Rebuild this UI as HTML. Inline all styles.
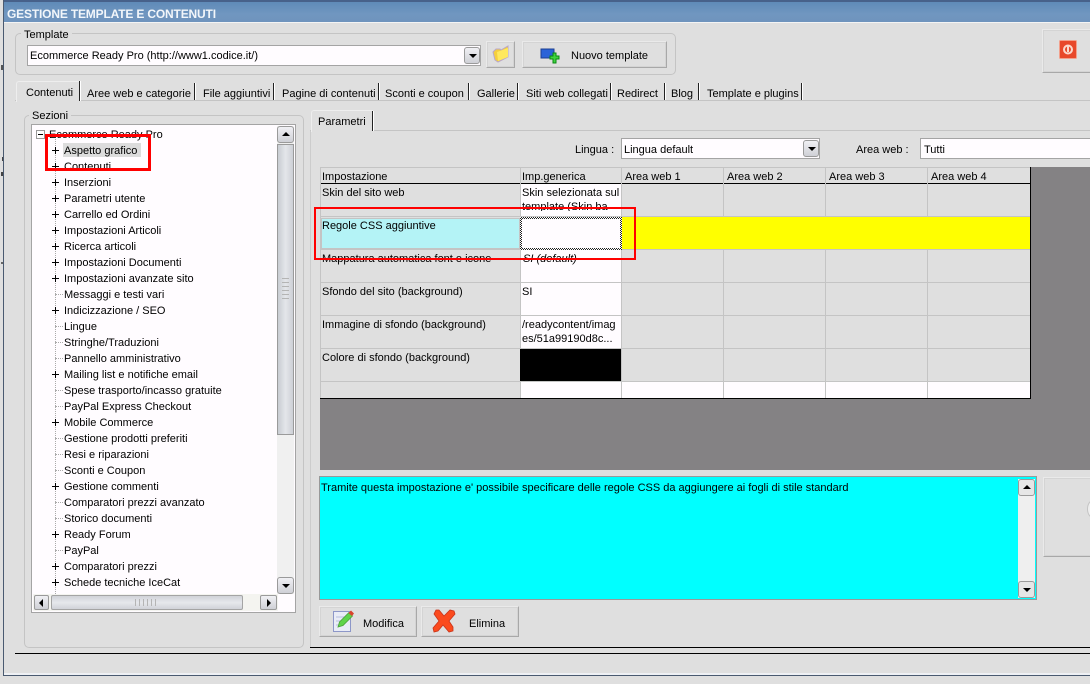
<!DOCTYPE html>
<html lang="it"><head><meta charset="utf-8"><title>Gestione template e contenuti</title>
<style>
html,body{margin:0;padding:0;background:#dfdfdf}
body{width:1090px;height:684px;position:relative;overflow:hidden;font:11px/14px "Liberation Sans",sans-serif;color:#000}
div,span{position:absolute;box-sizing:border-box}
.t{white-space:nowrap;font-size:11px;line-height:14px;margin-top:1px}
.g{border:1px solid #c4c4c4;border-radius:5px}
.in{background:#fffcff;border:1px solid #a4a4a4}
.btn{background:#dfdfdf;border:1px solid;border-color:#eaeaea #a8a8a8 #a8a8a8 #eaeaea;box-shadow:inset 0 0 0 1px #d4d4d4}
.sb{background:linear-gradient(#f0f0f4,#cfd0d6);border:1px solid #9a9a9a;border-radius:2px}
.sep{width:2px;background:#222;top:83px;height:17px;border-right:1px solid #fff}
.up:after,.dn:after,.lf:after,.rt:after{content:"";position:absolute;width:0;height:0}
.up:after{left:4px;top:5px;border:4px solid transparent;border-top:0;border-bottom:4px solid #000}
.dn:after{left:4px;top:6px;border:4px solid transparent;border-bottom:0;border-top:4px solid #000}
.lf:after{left:4px;top:3px;border:4px solid transparent;border-left:0;border-right:4px solid #000}
.rt:after{left:6px;top:3px;border:4px solid transparent;border-right:0;border-left:4px solid #000}
.p{width:7px;height:7px;left:52px}
.p:before{content:"";position:absolute;left:0;top:3px;width:7px;height:1px;background:#000}
.p:after{content:"";position:absolute;left:3px;top:0;width:1px;height:7px;background:#000}
.h{left:55px;width:8px;height:0;border-top:1px dotted #aaa}
.r{border:2px solid #f00;background:transparent}
.c{background:#dfdfdf}
.w{background:#fffcff}
.gl{background:#c4c4c4}
</style></head><body>
<!-- window frame -->
<div style="left:3px;top:0;width:1087px;height:676px;background:#dfdfdf;border-left:1px solid #4a5a70;border-bottom:1px solid #4a5a70"></div>
<div style="left:4px;top:0;width:1086px;height:2px;background:#47618a"></div>
<div style="left:4px;top:2px;width:1086px;height:20px;background:linear-gradient(#5f8ab8,#7096c0 60%,#6f94bd)"></div>
<div style="left:4px;top:22px;width:1086px;height:1px;background:#f4f4f4"></div>
<div style="left:4px;top:673px;width:1086px;height:2px;background:#eef0f4"></div>
<div style="left:1px;top:65px;width:2px;height:5px;background:#555"></div>
<div style="left:2px;top:157px;width:1px;height:4px;background:#444"></div>
<div style="left:1px;top:172px;width:2px;height:4px;background:#444"></div>
<div style="left:1px;top:262px;width:2px;height:2px;background:#666"></div>
<div class="t" style="left:7px;top:6px;color:#f2f6fa;font-weight:bold;font-size:12px;letter-spacing:-.17px">GESTIONE TEMPLATE E CONTENUTI</div>

<!-- template group -->
<div class="g" style="left:15px;top:33px;width:661px;height:42px"></div>
<div class="c t" style="left:21px;top:27px;padding:0 3px">Template</div>
<div class="in" style="left:27px;top:45px;width:454px;height:21px"></div>
<div class="t" style="left:30px;top:48px">Ecommerce Ready Pro (http://www1.codice.it/)</div>
<div class="sb dn" style="left:464px;top:47px;width:16px;height:17px;border-radius:3px"></div>
<div class="btn" style="left:486px;top:41px;width:29px;height:27px"></div>
<svg style="position:absolute;left:492px;top:45px" width="18" height="18" viewBox="0 0 18 18"><path d="M1 7 L4 4 L8 4 L9 5 L16 1 L16 12 L6 17 L3 15Z" fill="#f5cf3c" stroke="#b9a7c8"/><path d="M5 7 L16 3 L16 12 L6 16Z" fill="#ffe95e"/></svg>
<div class="btn" style="left:522px;top:41px;width:145px;height:27px"></div>
<svg style="position:absolute;left:540px;top:48px" width="20" height="16" viewBox="0 0 20 16"><rect x="1" y="1" width="13" height="9" fill="#2a63d8" stroke="#1c3f92"/><path d="M10 8h3V5h3v3h3v3h-3v4h-3v-4h-3z" fill="#3fd33f" stroke="#0a8a12"/></svg>
<div class="t" style="left:571px;top:48px">Nuovo template</div>
<div class="btn" style="left:1042px;top:29px;width:60px;height:44px"></div>
<svg style="position:absolute;left:1059px;top:40px" width="18" height="19" viewBox="0 0 18 19"><rect x=".5" y=".5" width="17" height="18" rx="1" fill="#e8482a" stroke="#f2a08c"/><circle cx="9" cy="9.500" r="4" fill="none" stroke="#fbd8cc" stroke-width="2"/><rect x="8" y="6" width="2" height="6" fill="#fbd8cc"/></svg>

<!-- tabs -->
<div class="gl" style="left:15px;top:100px;width:1075px;height:1px"></div>
<div class="c" style="left:16px;top:81px;width:63px;height:21px;border-top:1px solid #eee;border-left:1px solid #eee;border-radius:3px 0 0 0"></div>
<div class="t" style="left:26px;top:85px">Contenuti</div>
<div class="sep" style="left:79px;top:81px;height:20px"></div>
<div class="t" style="left:87px;top:86px">Aree web e categorie</div><div class="sep" style="left:194px"></div>
<div class="t" style="left:203px;top:86px">File aggiuntivi</div><div class="sep" style="left:273px"></div>
<div class="t" style="left:282px;top:86px">Pagine di contenuti</div><div class="sep" style="left:378px"></div>
<div class="t" style="left:385px;top:86px">Sconti e coupon</div><div class="sep" style="left:468px"></div>
<div class="t" style="left:477px;top:86px">Gallerie</div><div class="sep" style="left:517px"></div>
<div class="t" style="left:526px;top:86px">Siti web collegati</div><div class="sep" style="left:610px"></div>
<div class="t" style="left:617px;top:86px">Redirect</div><div class="sep" style="left:664px"></div>
<div class="t" style="left:671px;top:86px">Blog</div><div class="sep" style="left:698px"></div>
<div class="t" style="left:707px;top:86px">Template e plugins</div><div class="sep" style="left:801px"></div>

<!-- sezioni -->
<div class="g" style="left:24px;top:115px;width:280px;height:533px"></div>
<div class="c t" style="left:29px;top:108px;padding:0 3px">Sezioni</div>
<div class="in" style="left:31px;top:124px;width:265px;height:489px"></div>
<div style="left:32px;top:125px;width:245px;height:469px;overflow:hidden">
<div style="left:23px;top:9px;width:0;height:460px;border-left:1px dotted #aaa"></div>
</div>
<div style="left:36px;top:130px;width:9px;height:9px;border:1px solid #999;background:#fff"></div>
<div style="left:38px;top:134px;width:5px;height:1px;background:#000"></div>
<div style="left:63px;top:143px;width:78px;height:14px;background:#dcdcdc"></div>
<div id="tree" style="left:0;top:0;width:277px;height:594px;overflow:hidden">
<span class="t" style="left:49px;top:127px">Ecommerce Ready Pro</span>
<span class="t" style="left:64px;top:143px">Aspetto grafico</span><span class="p" style="top:147px"></span>
<span class="t" style="left:64px;top:159px">Contenuti</span><span class="p" style="top:163px"></span>
<span class="t" style="left:64px;top:175px">Inserzioni</span><span class="p" style="top:179px"></span>
<span class="t" style="left:64px;top:191px">Parametri utente</span><span class="p" style="top:195px"></span>
<span class="t" style="left:64px;top:207px">Carrello ed Ordini</span><span class="p" style="top:211px"></span>
<span class="t" style="left:64px;top:223px">Impostazioni Articoli</span><span class="p" style="top:227px"></span>
<span class="t" style="left:64px;top:239px">Ricerca articoli</span><span class="p" style="top:243px"></span>
<span class="t" style="left:64px;top:255px">Impostazioni Documenti</span><span class="p" style="top:259px"></span>
<span class="t" style="left:64px;top:271px">Impostazioni avanzate sito</span><span class="p" style="top:275px"></span>
<span class="t" style="left:64px;top:287px">Messaggi e testi vari</span><span class="h" style="top:294px"></span>
<span class="t" style="left:64px;top:303px">Indicizzazione / SEO</span><span class="p" style="top:307px"></span>
<span class="t" style="left:64px;top:319px">Lingue</span><span class="h" style="top:326px"></span>
<span class="t" style="left:64px;top:335px">Stringhe/Traduzioni</span><span class="h" style="top:342px"></span>
<span class="t" style="left:64px;top:351px">Pannello amministrativo</span><span class="h" style="top:358px"></span>
<span class="t" style="left:64px;top:367px">Mailing list e notifiche email</span><span class="p" style="top:371px"></span>
<span class="t" style="left:64px;top:383px">Spese trasporto/incasso gratuite</span><span class="h" style="top:390px"></span>
<span class="t" style="left:64px;top:399px">PayPal Express Checkout</span><span class="h" style="top:406px"></span>
<span class="t" style="left:64px;top:415px">Mobile Commerce</span><span class="p" style="top:419px"></span>
<span class="t" style="left:64px;top:431px">Gestione prodotti preferiti</span><span class="h" style="top:438px"></span>
<span class="t" style="left:64px;top:447px">Resi e riparazioni</span><span class="h" style="top:454px"></span>
<span class="t" style="left:64px;top:463px">Sconti e Coupon</span><span class="h" style="top:470px"></span>
<span class="t" style="left:64px;top:479px">Gestione commenti</span><span class="p" style="top:483px"></span>
<span class="t" style="left:64px;top:495px">Comparatori prezzi avanzato</span><span class="h" style="top:502px"></span>
<span class="t" style="left:64px;top:511px">Storico documenti</span><span class="h" style="top:518px"></span>
<span class="t" style="left:64px;top:527px">Ready Forum</span><span class="p" style="top:531px"></span>
<span class="t" style="left:64px;top:543px">PayPal</span><span class="h" style="top:550px"></span>
<span class="t" style="left:64px;top:559px">Comparatori prezzi</span><span class="p" style="top:563px"></span>
<span class="t" style="left:64px;top:575px">Schede tecniche IceCat</span><span class="p" style="top:579px"></span>
<span class="t" style="left:64px;top:591px">Varie</span>
</div>
<!-- v scrollbar -->
<div style="left:277px;top:126px;width:17px;height:468px;background:#f0f0f0"></div>
<div class="sb up" style="left:277px;top:126px;width:17px;height:17px;border-radius:3px"></div>
<div style="left:277px;top:144px;width:17px;height:291px;background:linear-gradient(90deg,#c8ccd2,#e4e6ea 50%,#cdd0d6);border:1px solid #9a9a9a"></div>
<div style="left:282px;top:278px;width:7px;height:22px;background:repeating-linear-gradient(#b4b4b4 0 1px,transparent 1px 4px)"></div>
<div class="sb dn" style="left:277px;top:577px;width:17px;height:17px;border-radius:3px"></div>
<!-- h scrollbar -->
<div style="left:33px;top:594px;width:245px;height:17px;background:#f4f4f0"></div>
<div class="sb lf" style="left:34px;top:595px;width:15px;height:15px"></div>
<div style="left:51px;top:595px;width:192px;height:15px;background:linear-gradient(#d0d2d8,#e6e8ec 50%,#d0d2d8);border:1px solid #a4a4a4;border-radius:2px"></div>
<div style="left:135px;top:599px;width:23px;height:7px;background:repeating-linear-gradient(90deg,#b4b4b4 0 1px,transparent 1px 4px)"></div>
<div class="sb rt" style="left:260px;top:595px;width:17px;height:15px"></div>
<!-- red rect 1 -->
<div class="r" style="left:45px;top:134px;width:106px;height:37px;border-width:3px"></div>

<!-- parametri -->
<div style="left:310px;top:130px;width:1px;height:518px;background:#ccc"></div>
<div class="gl" style="left:310px;top:130px;width:780px;height:1px"></div>
<div class="c" style="left:311px;top:110px;width:62px;height:22px;border-top:1px solid #eee;border-left:1px solid #eee;border-radius:3px 0 0 0"></div>
<div class="t" style="left:318px;top:114px">Parametri</div>
<div class="sep" style="left:372px;top:111px;height:20px"></div>
<div class="t" style="left:575px;top:142px">Lingua :</div>
<div class="in" style="left:621px;top:138px;width:199px;height:21px"></div>
<div class="t" style="left:624px;top:142px">Lingua default</div>
<div class="sb dn" style="left:803px;top:140px;width:16px;height:17px;border-radius:3px"></div>
<div class="t" style="left:856px;top:142px">Area web :</div>
<div class="in" style="left:920px;top:138px;width:175px;height:21px"></div>
<div class="t" style="left:924px;top:142px">Tutti</div>

<!-- grid -->
<div style="left:320px;top:167px;width:770px;height:303px;background:#848284"></div>
<div style="left:320px;top:167px;width:711px;height:232px;background:#dfdfdf;border-right:1px solid #000;border-bottom:1px solid #000"></div>
<div class="gl" style="left:320px;top:167px;width:710px;height:1px"></div>
<div class="gl" style="left:320px;top:167px;width:1px;height:231px"></div>
<div class="w" style="left:521px;top:184px;width:100px;height:214px"></div>
<div class="w" style="left:622px;top:382px;width:408px;height:16px"></div>
<div style="left:321px;top:183px;width:709px;height:1px;background:#000"></div>
<div class="gl" style="left:520px;top:167px;width:1px;height:231px"></div>
<div class="gl" style="left:621px;top:167px;width:1px;height:231px"></div>
<div class="gl" style="left:723px;top:167px;width:1px;height:231px"></div>
<div class="gl" style="left:825px;top:167px;width:1px;height:231px"></div>
<div class="gl" style="left:927px;top:167px;width:1px;height:231px"></div>
<div class="gl" style="left:320px;top:216px;width:710px;height:1px"></div>
<div class="gl" style="left:320px;top:249px;width:710px;height:1px"></div>
<div class="gl" style="left:320px;top:282px;width:710px;height:1px"></div>
<div class="gl" style="left:320px;top:315px;width:710px;height:1px"></div>
<div class="gl" style="left:320px;top:348px;width:710px;height:1px"></div>
<div class="gl" style="left:320px;top:381px;width:710px;height:1px"></div>
<div class="t" style="left:322px;top:169px">Impostazione</div>
<div class="t" style="left:522px;top:169px">Imp.generica</div>
<div class="t" style="left:625px;top:169px">Area web 1</div>
<div class="t" style="left:727px;top:169px">Area web 2</div>
<div class="t" style="left:829px;top:169px">Area web 3</div>
<div class="t" style="left:931px;top:169px">Area web 4</div>
<div class="t" style="left:322px;top:185px">Skin del sito web</div>
<div class="t" style="left:522px;top:185px">Skin selezionata sul</div>
<div style="left:522px;top:199px;width:98px;height:12px;overflow:hidden"><span class="t" style="left:0;top:0">template (Skin ba</span></div>
<div style="left:321px;top:218px;width:199px;height:31px;background:#b4f3f6;border:1px solid #c4c4c4"></div>
<div class="t" style="left:322px;top:218px">Regole CSS aggiuntive</div>
<div style="left:520px;top:217px;width:102px;height:33px;background:conic-gradient(#222 25%,#fff 0 50%,#222 0 75%,#fff 0) 0 0/2px 2px"></div>
<div class="w" style="left:522px;top:219px;width:98px;height:29px"></div>
<div style="left:622px;top:217px;width:408px;height:32px;background:#ff0"></div>
<div class="t" style="left:322px;top:251px">Mappatura automatica font e icone</div>
<div class="t" style="left:523px;top:251px;font-style:italic">SI (default)</div>
<div class="t" style="left:322px;top:284px">Sfondo del sito (background)</div>
<div class="t" style="left:522px;top:284px">SI</div>
<div class="t" style="left:322px;top:317px">Immagine di sfondo (background)</div>
<div class="t" style="left:522px;top:317px">/readycontent/imag</div>
<div class="t" style="left:522px;top:331px">es/51a99190d8c...</div>
<div class="t" style="left:322px;top:350px">Colore di sfondo (background)</div>
<div style="left:520px;top:349px;width:101px;height:32px;background:#000"></div>
<!-- red rect 2 -->
<div class="r" style="left:314px;top:207px;width:322px;height:53px;border-width:2px"></div>

<!-- memo -->
<div style="left:319px;top:476px;width:718px;height:124px;background:#0ff;border:1px solid #999"></div>
<div class="t" style="left:321px;top:480px">Tramite questa impostazione e' possibile specificare delle regole CSS da aggiungere ai fogli di stile standard</div>
<div style="left:1018px;top:479px;width:17px;height:119px;background:#efefef"></div>
<div class="sb up" style="left:1018px;top:479px;width:17px;height:17px;border-radius:3px;background:#e6e6e6"></div>
<div class="sb dn" style="left:1018px;top:581px;width:17px;height:17px;border-radius:3px;background:#e6e6e6"></div>
<div class="btn" style="left:1043px;top:477px;width:60px;height:80px"></div>
<div style="left:1087px;top:500px;width:12px;height:18px;border-radius:50%;background:#eee;border:1px solid #c4c4c4"></div>

<!-- buttons -->
<div class="btn" style="left:319px;top:606px;width:98px;height:31px"></div>
<svg style="position:absolute;left:331px;top:609px" width="24" height="24" viewBox="0 0 24 24"><rect x="2.500" y="2.500" width="17" height="20" fill="#e9ecf6" stroke="#8d97c8"/><path d="M5 8h12M5 12h5M5 16h8" stroke="#b6bedd"/><path d="M7 18 L8.500 13 L18 3.500 L21.500 7 L12 16.500Z" fill="#5fd44a" stroke="#4ba03a" stroke-width=".8"/><path d="M17.500 4 L20 1.500 L23 4.500 L21 7Z" fill="#d8442e"/></svg>
<div class="t" style="left:363px;top:616px">Modifica</div>
<div class="btn" style="left:421px;top:606px;width:98px;height:31px"></div>
<svg style="position:absolute;left:432px;top:609px" width="24" height="24" viewBox="0 0 24 24"><path d="M4 1 L7 1 L12 7 L18 1 L22 2 L23 5 L17 12 L21 18 L21 22 L17 23 L11 16 L6 22 L2 23 L1 19 L7 12 L2 5Z" fill="#fb4b1e" stroke="#c9341a" stroke-width=".8"/></svg>
<div class="t" style="left:469px;top:616px">Elimina</div>

<!-- lower lines -->
<div style="left:310px;top:647px;width:780px;height:1px;background:#000"></div>
<div style="left:15px;top:653px;width:1075px;height:1px;background:#000"></div>
</body></html>
